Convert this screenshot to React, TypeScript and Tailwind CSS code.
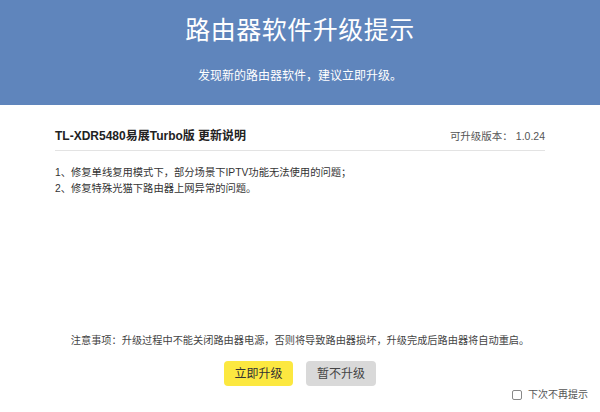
export default function App() {
  return (
    <div
      className="flex h-[412px] w-[600px] flex-col bg-white"
      style={{ fontFamily: '"Liberation Sans", "Noto Sans CJK SC", sans-serif' }}
    >
      <header className="flex h-[105px] shrink-0 flex-col items-center bg-[#5f85bc] text-white">
        <h1 className="mt-[12px] text-[25px] leading-[36px] tracking-[0.5px]">路由器软件升级提示</h1>
        <p className="mt-[19px] text-[12px] leading-[18px]">发现新的路由器软件，建议立即升级。</p>
      </header>

      <main className="flex flex-1 flex-col px-[55px]">
        <div className="mt-[23px] flex items-center justify-between border-b border-[#e3e3e3] pb-[6px]">
          <h2 className="text-[12px] leading-[16px] font-bold text-[#222]">TL-XDR5480易展Turbo版 更新说明</h2>
          <span className="text-[10.5px] leading-[16px] text-[#555]">可升级版本：&nbsp;1.0.24</span>
        </div>
        <ul className="mt-[14px] text-[10.3px] leading-[16px] text-[#333]">
          <li>1、修复单线复用模式下，部分场景下IPTV功能无法使用的问题；</li>
          <li>2、修复特殊光猫下路由器上网异常的问题。</li>
        </ul>

        <div className="mt-auto flex flex-col items-center">
          <p className="text-[10.2px] leading-[14px] text-[#444]">
            注意事项：升级过程中不能关闭路由器电源，否则将导致路由器损坏，升级完成后路由器将自动重启。
          </p>
          <div className="mt-[13px] flex gap-[13px]">
            <button className="h-[25px] w-[69px] rounded-[4px] bg-[#fce840] text-[12px] text-[#333]">立即升级</button>
            <button className="h-[25px] w-[70px] rounded-[4px] bg-[#d9d9d9] text-[12px] text-[#444]">暂不升级</button>
          </div>
        </div>
      </main>

      <label className="mb-[10px] mr-[12px] mt-[2px] flex items-center justify-end gap-[6px] text-[10px] leading-[14px] text-[#555]">
        <span className="h-[10px] w-[10px] rounded-[2px] border border-[#888] bg-white" />
        下次不再提示
      </label>
    </div>
  );
}
